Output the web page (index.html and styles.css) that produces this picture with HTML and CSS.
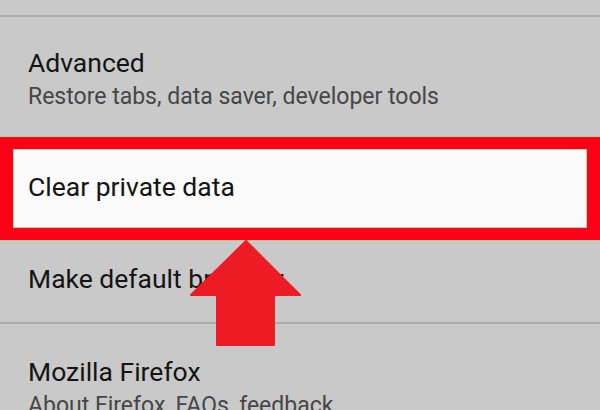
FILE: index.html
```html
<!DOCTYPE html>
<html>
<head>
<meta charset="utf-8">
<link rel="stylesheet" href="styles.css">
</head>
<body>
<div class="screen">
  <div class="top-fill"></div>
  <div class="divider"></div>
  <div class="item item-advanced">
    <div class="title">Advanced</div>
    <div class="subtitle">Restore tabs, data saver, developer tools</div>
  </div>
  <div class="highlight">
    <div class="highlight-inner">
      <div class="title">Clear private data</div>
    </div>
  </div>
  <div class="item item-default">
    <div class="title">Make default browser</div>
  </div>
  <div class="divider"></div>
  <div class="item item-firefox">
    <div class="title">Mozilla Firefox</div>
    <div class="subtitle">About Firefox, FAQs, feedback</div>
  </div>
  <svg class="arrow" width="112" height="108" viewBox="0 0 112 108">
    <polygon points="56,1 110,55 84,55 84,105 27,105 27,55 1,55" fill="#ed1c24" stroke="#ed1c24" stroke-width="2" stroke-linejoin="round"/>
  </svg>
</div>
</body>
</html>
```
FILE: styles.css
```css
html, body {
  margin: 0;
  padding: 0;
}
body {
  background: #c9c9c9;
  font-family: Roboto, "Noto Sans", sans-serif;
}
.screen {
  position: relative;
  width: 600px;
  height: 410px;
  overflow: hidden;
  background: #c9c9c9;
  display: flex;
  flex-direction: column;
}
.top-fill {
  height: 15px;
  flex: none;
}
.divider {
  height: 2px;
  background: #ababab;
  flex: none;
}
.item {
  flex: none;
  padding-left: 28px;
}
.title {
  font-size: 26.5px;
  line-height: 30px;
  color: #141414;
  white-space: nowrap;
}
.subtitle {
  font-size: 23px;
  line-height: 30px;
  margin-top: 4px;
  color: #464646;
  white-space: nowrap;
}
.item-advanced {
  padding-top: 31px;
  padding-bottom: 25px;
}
.highlight {
  flex: none;
  border-style: solid;
  border-color: #fd0119;
  border-width: 12px 13px;
  box-shadow: 0 -1px 0 #9fd69a, 0 1px 0 #9fd69a;
}
.highlight-inner {
  background: #fafafa;
  border: 1px solid #a6e0a0;
  padding: 22px 0 25px 14px;
}
.item-default {
  padding-top: 24px;
  padding-bottom: 28px;
}
.item-firefox {
  padding-top: 33px;
}
.arrow {
  position: absolute;
  left: 190px;
  top: 240px;
}
```
